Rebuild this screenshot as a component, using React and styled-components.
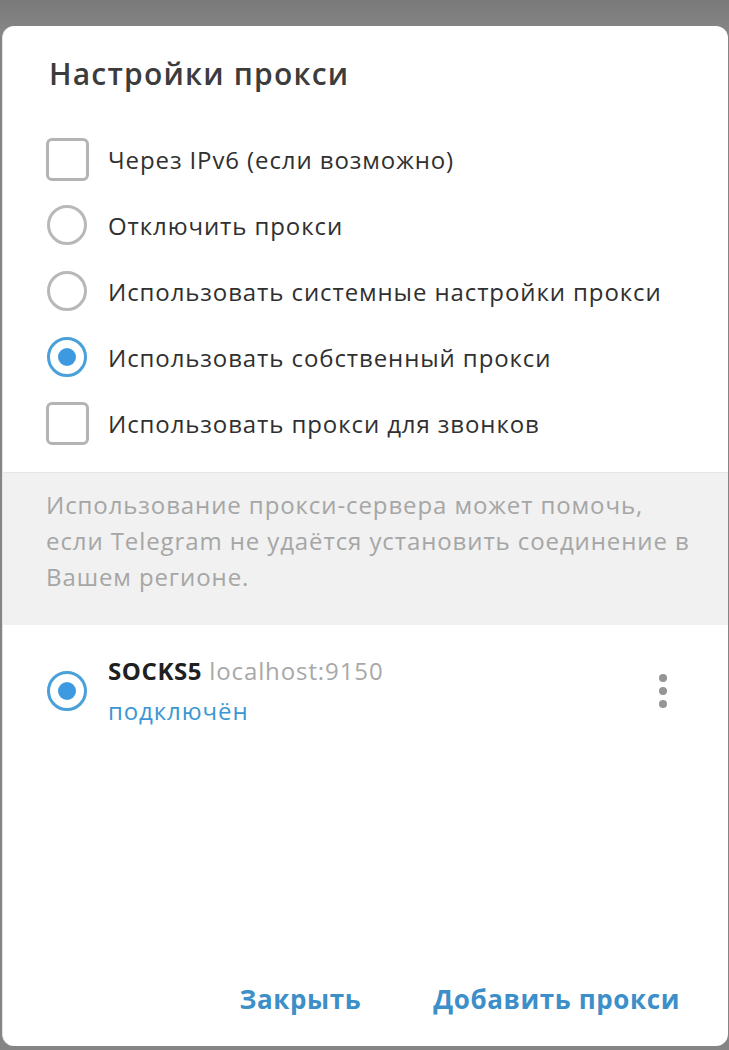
import React from "react";
import styled, { createGlobalStyle } from "styled-components";

const Global = createGlobalStyle`
  html, body { margin: 0; padding: 0; background: #7f7f7f; }
  body { font-family: "Open Sans", "Noto Sans", sans-serif; }
`;

const Backdrop = styled.div`
  width: 729px;
  height: 1050px;
  padding: 26px 1px 4px 2px;
  box-sizing: border-box;
  background: linear-gradient(#7a7a7a, #858585 30px, #858585);
`;

const Dialog = styled.div`
  height: 100%;
  background: #fff;
  border-radius: 12px;
  border-left: 1px solid #e4e4e4;
  display: flex;
  flex-direction: column;
  overflow: hidden;
`;

const Title = styled.h1`
  margin: 0;
  padding: 28px 0 0 46px;
  font-size: 30px;
  font-weight: 600;
  letter-spacing: 1.2px;
  line-height: 40px;
  color: #3c3c3c;
`;

const Options = styled.div`
  display: flex;
  flex-direction: column;
  padding: 32px 0 16px 42px;
`;

const Row = styled.label`
  display: flex;
  align-items: center;
  height: 66px;
  gap: 19px;
  font-size: 24px;
  letter-spacing: 0.9px;
  color: #303030;
`;

const Box = styled.span`
  width: 44px;
  height: 44px;
  display: flex;
  align-items: center;
  justify-content: center;
  flex-shrink: 0;
`;

const Check = styled.span`
  width: 43px;
  height: 43px;
  box-sizing: border-box;
  border: 3px solid #b4b4b4;
  border-radius: 6px;
`;

const Radio = styled.span`
  width: 40px;
  height: 40px;
  box-sizing: border-box;
  border: 3px solid ${(p) => (p.$on ? "#4aa0d8" : "#b8b8b8")};
  border-radius: 50%;
  display: flex;
  align-items: center;
  justify-content: center;
  &::after {
    content: "";
    width: 18px;
    height: 18px;
    border-radius: 50%;
    background: #3e9ae0;
    display: ${(p) => (p.$on ? "block" : "none")};
  }
`;

const Info = styled.div`
  background: #f0f1f0;
  border-top: 1px solid #e6e6e6;
  padding: 14px 30px 30px 43px;
  font-size: 24px;
  letter-spacing: 0.9px;
  line-height: 36px;
  color: #a6a6a6;
`;

const ProxyRow = styled.div`
  display: flex;
  align-items: center;
  padding: 26px 40px 0 42px;
  gap: 19px;
`;

const ProxyText = styled.div`
  flex: 1;
  display: flex;
  flex-direction: column;
  font-size: 24px;
  letter-spacing: 0.9px;
  line-height: 40px;
`;

const Name = styled.span`
  font-weight: 700;
  letter-spacing: 0.6px;
  color: #202020;
`;

const Host = styled.span`
  color: #a8a8a8;
`;

const Status = styled.span`
  color: #3b97d3;
`;

const Dots = styled.div`
  display: flex;
  flex-direction: column;
  gap: 5px;
  margin-right: 21px;
  span {
    width: 8px;
    height: 8px;
    border-radius: 50%;
    background: #959595;
  }
`;

const Footer = styled.div`
  margin-top: auto;
  display: flex;
  justify-content: flex-end;
  gap: 72px;
  padding: 0 48px 22px 0;
`;

const Button = styled.button`
  border: 0;
  background: none;
  padding: 0;
  font-family: inherit;
  font-size: 26px;
  font-weight: 700;
  letter-spacing: 0.6px;
  color: #3c8fc8;
  line-height: 50px;
  cursor: pointer;
`;

const options = [
  { type: "check", label: "Через IPv6 (если возможно)" },
  { type: "radio", label: "Отключить прокси" },
  { type: "radio", label: "Использовать системные настройки прокси" },
  { type: "radio", on: true, label: "Использовать собственный прокси" },
  { type: "check", label: "Использовать прокси для звонков" },
];

export default function App() {
  return (
    <>
      <Global />
      <Backdrop>
        <Dialog>
          <Title>Настройки прокси</Title>
          <Options>
            {options.map((o) => (
              <Row key={o.label}>
                <Box>{o.type === "check" ? <Check /> : <Radio $on={o.on} />}</Box>
                {o.label}
              </Row>
            ))}
          </Options>
          <Info>
            Использование прокси-сервера может помочь, если Telegram не удаётся
            установить соединение в Вашем регионе.
          </Info>
          <ProxyRow>
            <Box>
              <Radio $on />
            </Box>
            <ProxyText>
              <span>
                <Name>SOCKS5</Name> <Host>localhost:9150</Host>
              </span>
              <Status>подключён</Status>
            </ProxyText>
            <Dots>
              <span />
              <span />
              <span />
            </Dots>
          </ProxyRow>
          <Footer>
            <Button>Закрыть</Button>
            <Button>Добавить прокси</Button>
          </Footer>
        </Dialog>
      </Backdrop>
    </>
  );
}
